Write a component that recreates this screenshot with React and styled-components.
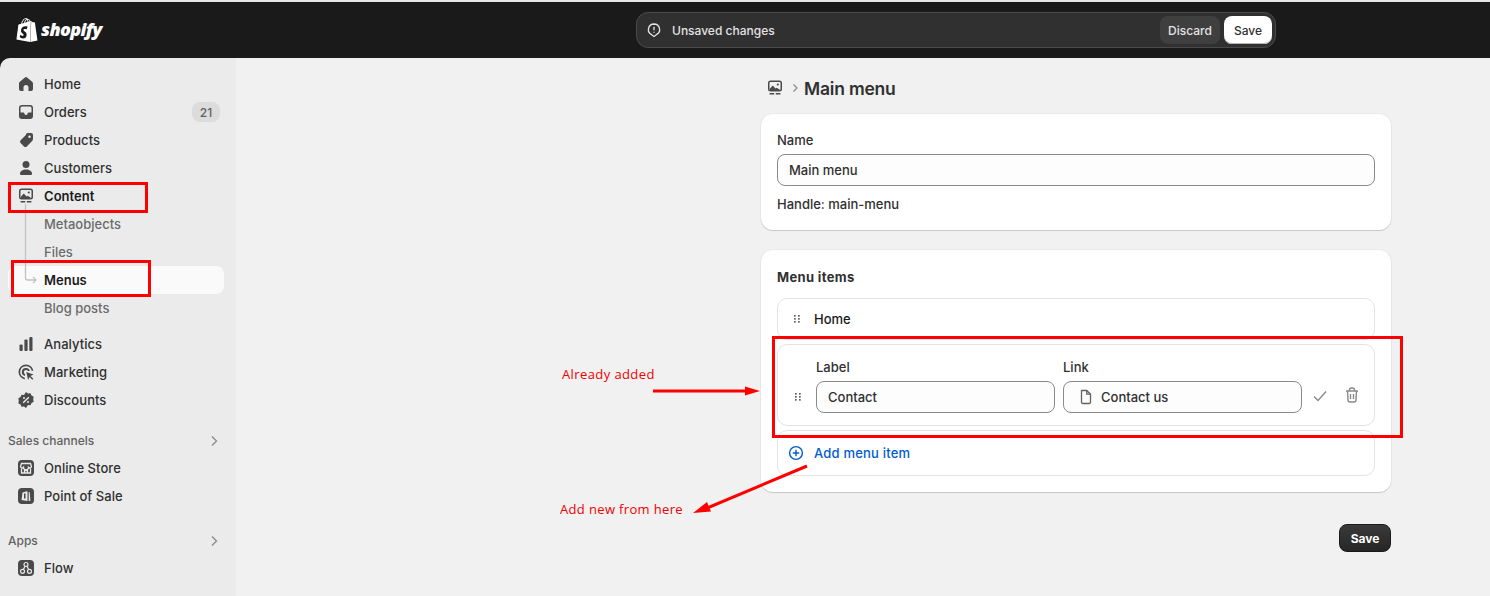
import React from "react";
import styled, { createGlobalStyle } from "styled-components";
import { SiShopify } from "react-icons/si";

const Global = createGlobalStyle`
  html, body { margin: 0; padding: 0; background: #f1f1f1; }
  * { box-sizing: border-box; }
  body { font-family: Inter, "Liberation Sans", sans-serif; font-size: 13px; color: #303030; }
`;

const Page = styled.div`
  position: relative; width: 1490px; height: 596px; overflow: hidden;
  display: flex; flex-direction: column; border-top: 2px solid #e6e6e6; background: #1a1a1a;
`;
const TopBar = styled.header`
  flex: 0 0 56px; display: flex; align-items: center; position: relative; padding-left: 15px;
`;
const Logo = styled.div`display: flex; align-items: center; gap: 2px; width: 621px; color: #fff;`;
const Wordmark = styled.span`
  font: italic 800 18px/24px "Open Sans", sans-serif; letter-spacing: -0.65px; color: #fff; position: relative; top: -1px;
`;
const SavePill = styled.div`
  width: 640px; height: 36px; display: flex; align-items: center; gap: 4px; padding: 0 3px 0 9px;
  background: #303030; border: 1px solid #4a4a4a; border-radius: 12px;
`;
const PillText = styled.span`flex: 1; color: #e3e3e3; font-size: 12px; font-weight: 450; margin-left: 6px;`;
const DiscardBtn = styled.button`
  height: 28px; width: 60px; border: 0; border-radius: 8px; background: #3f3f3f; color: #e3e3e3;
  font: 550 12px Inter, sans-serif; padding: 0;
`;
const WhiteBtn = styled.button`
  height: 28px; width: 48px; border: 0; border-radius: 8px; background: #fff; color: #303030;
  font: 500 12px Inter, sans-serif; padding: 0; box-shadow: inset 0 -1px 0 #b5b5b5;
`;
const Body = styled.div`flex: 1; display: flex; min-height: 0;`;
const Sidebar = styled.nav`
  flex: 0 0 236px; background: #ebebeb; border-top-left-radius: 10px; padding: 12px 12px 0 8px;
`;
const NavGroup = styled.div`position: relative; margin-bottom: ${p => p.$mb || 0}px;`;
const NavRow = styled.div`
  height: 28px; display: flex; align-items: center; gap: 8px; border-radius: 8px; width: 216px;
  background: ${p => (p.$active ? "#fafafa" : "transparent")};
  color: ${p => (p.$sub ? "#6b6b6b" : p.$strong ? "#1a1a1a" : "#303030")};
  font-weight: ${p => (p.$sub ? 500 : p.$strong ? 600 : 550)};
  padding-left: ${p => (p.$indent ? 36 : 8)}px;
`;
const NavIcon = styled.svg`flex: 0 0 20px; width: 20px; height: 20px; color: #4a4a4a;`;
const NavLabel = styled.span`flex: 1; letter-spacing: 0.05px;`;
const Badge = styled.span`
  height: 20px; width: 28px; border-radius: 8px; background: #dcdcdc; color: #616161; font-size: 12px;
  font-weight: 500; display: flex; align-items: center; justify-content: center; margin-right: 4px;
`;
const SectionHead = styled.div`
  height: 27px; display: flex; align-items: center; justify-content: space-between; width: 216px;
  padding-right: 2px; color: #616161; font-size: 12px; font-weight: 500; margin-top: ${p => p.$mt || 0}px;
`;
const TreeLine = styled.svg`position: absolute; left: 12px; top: 134px; width: 20px; height: 90px; pointer-events: none;`;
const Main = styled.main`
  flex: 1; background: #f1f1f1; padding: 0 99px 0 525px; display: flex; flex-direction: column;
`;
const Crumbs = styled.div`height: 56px; padding: 4px 0 0 4px; display: flex; align-items: center; gap: 4px; color: #8a8a8a;`;
const CrumbIcon = styled.svg`width: 20px; height: 20px; color: #4a4a4a;`;
const Title = styled.h1`margin: 0 0 0 -1px; font-size: 17.5px; font-weight: 600; color: #303030; letter-spacing: -0.2px;`;
const Card = styled.section`
  background: #fff; border-radius: 12px; padding: 16px; margin-bottom: ${p => p.$mb ?? 20}px;
  box-shadow: 0 1px 1px rgba(0,0,0,.14), 0 0 0 1px rgba(0,0,0,.03);
`;
const FieldLabel = styled.div`height: 20px; line-height: 20px; color: #303030; font-weight: 450; margin-bottom: 4px;`;
const TextBox = styled.div`
  height: 32px; border: 1px solid #8a8a8a; border-radius: 8px; background: #fdfdfd; display: flex; align-items: center;
  gap: 5px; padding: 0 11px; color: #303030; font-weight: 450;
`;
const Handle = styled.div`height: 20px; line-height: 20px; margin-top: 8px; color: #303030; font-weight: 450;`;
const CardTitle = styled.h2`margin: 1px 0 11px; font-size: 13px; line-height: 20px; font-weight: 650; color: #303030; letter-spacing: 0.35px;`;
const ItemStack = styled.div`display: flex; flex-direction: column; gap: 4px;`;
const Item = styled.div`
  height: ${p => p.$h}px; border: 1px solid #e3e3e3; border-radius: 10px; display: flex; align-items: ${p => p.$align || "center"};
  padding: ${p => p.$pad || "0 0 0 14px"};
`;
const ItemName = styled.span`margin-left: 12px; margin-top: -1px; font-weight: 500; color: #1a1a1a;`;
const Drag = styled.svg`width: 10px; height: 12px; color: #616161; flex: 0 0 10px; margin-top: ${p => p.$mt || 0}px;`;
const FieldCol = styled.div`flex: 0 0 239px; margin: 0 8px 0 ${p => p.$ml || 0}px;`;
const ActionIcon = styled.svg`
  width: 20px; height: 20px; flex: 0 0 20px; fill: none; stroke: #8a8a8a; stroke-width: 1.4;
  margin-top: ${p => p.$mt}px; margin-left: ${p => p.$ml}px;
`;
const DocIcon = styled.svg`width: 20px; height: 20px; flex: 0 0 20px; fill: none; stroke: #616161; stroke-width: 1.3; margin-left: 1px;`;
const AddIcon = styled.svg`width: 16px; height: 16px; fill: none; stroke: #005bd3; stroke-width: 1.4;`;
const AddLabel = styled.span`margin-left: 10px; color: #005bd3; font-weight: 550; letter-spacing: 0.2px;`;
const Footer = styled.div`display: flex; justify-content: flex-end; margin-top: 32px;`;
const DarkBtn = styled.button`
  width: 52px; height: 28px; border-radius: 8px; border: 1px solid #1a1a1a; padding: 0; color: #fff;
  background: linear-gradient(#3a3a3a, #262626); font: 650 12px Inter, sans-serif;
`;
const RedBox = styled.div`
  position: absolute; left: ${p => p.$x}px; top: ${p => p.$y}px; width: ${p => p.$w}px; height: ${p => p.$h}px;
  border: 3px solid #ff0000; pointer-events: none;
`;
const Note = styled.span`
  position: absolute; left: ${p => p.$x}px; top: ${p => p.$y}px; color: #f00000; font: 400 13px/18px "Open Sans", sans-serif;
  letter-spacing: ${p => p.$ls}px; white-space: nowrap;
`;
const ArrowLayer = styled.svg`position: absolute; left: 0; top: 0; width: 1490px; height: 596px; pointer-events: none;`;

const I = ({ children, as: As = NavIcon }) => <As viewBox="0 0 20 20" fill="currentColor">{children}</As>;

const ContentGlyph = (
  <>
    <path fillRule="evenodd" d="M5.500 2.500h9a2.500 2.500 0 0 1 2.500 2.500v6a2.500 2.500 0 0 1-2.500 2.500h-9A2.500 2.500 0 0 1 3 11V5a2.500 2.500 0 0 1 2.500-2.500Zm0 1.500a1 1 0 0 0-1 1v6a1 1 0 0 0 1 1h9a1 1 0 0 0 1-1V5a1 1 0 0 0-1-1h-9Z" />
    <circle cx="12.800" cy="6.500" r="1.100" />
    <path d="M5 10.500 7.800 7.500l2.700 3 1.200-.8 2.800 1.800v.5H5Z" />
    <rect x="4.500" y="15" width="4.800" height="1.500" rx=".6" />
    <rect x="10.700" y="15" width="4.800" height="1.500" rx=".6" />
  </>
);

const icons = {
  home: <path d="M8.900 3.400a1.700 1.700 0 0 1 2.200 0l5 4.300c.6.500.9 1.100.9 1.800V15a2 2 0 0 1-2 2h-2.500v-3.500a2.500 2.500 0 0 0-5 0V17H5a2 2 0 0 1-2-2V9.500c0-.7.300-1.300.9-1.800l5-4.300Z" />,
  orders: <path fillRule="evenodd" d="M6 3h8a3 3 0 0 1 3 3v8a3 3 0 0 1-3 3H6a3 3 0 0 1-3-3V6a3 3 0 0 1 3-3Zm0 1.500A1.500 1.500 0 0 0 4.500 6v4.500h3c.4 0 .8.300.8.700a1.700 1.700 0 0 0 3.400 0c0-.4.400-.7.800-.7h3V6A1.500 1.500 0 0 0 14 4.500H6Z" />,
  products: <path fillRule="evenodd" d="M11 3h4a2 2 0 0 1 2 2v4c0 .8-.3 1.500-.9 2.100l-5.300 5.300a2 2 0 0 1-2.800 0l-3.400-3.400a2 2 0 0 1 0-2.800l5.300-5.300A3 3 0 0 1 11 3Zm2.500 2.500a1 1 0 1 0 0 2.500 1 1 0 0 0 0-2.500Z" />,
  customers: <><circle cx="10" cy="6.500" r="3.500" /><path d="M10 11.500c-3.500 0-6 1.800-6 4v.2c0 .7.600 1.300 1.300 1.300h9.400c.7 0 1.300-.6 1.300-1.300v-.2c0-2.200-2.500-4-6-4Z" /></>,
  content: ContentGlyph,
  analytics: <><rect x="3.500" y="10.500" width="3.200" height="6.500" rx="1" /><rect x="8.400" y="5.500" width="3.200" height="11.500" rx="1" /><rect x="13.300" y="3" width="3.200" height="14" rx="1" /></>,
  marketing: <><path fillRule="evenodd" d="M10 2.500a7.500 7.500 0 0 1 7.400 6.300h-1.700A5.800 5.800 0 1 0 8.800 15.700v1.700A7.500 7.500 0 0 1 10 2.500Z" /><path fillRule="evenodd" d="M10 6a4 4 0 0 1 3.900 3h-1.900a2.200 2.200 0 1 0-3 3v1.900A4 4 0 0 1 10 6Z" /><path d="m10.300 10 7.200 2.600-3 1.400 2.800 2.800-1 1-2.800-2.800-1.400 3L10.300 10Z" /></>,
  discounts: <path fillRule="evenodd" d="m10 2 2 1.500 2.500-.2 1 2.300 2.200 1.200-.5 2.500.5 2.500-2.200 1.200-1 2.300-2.500-.2L10 18l-2-1.500-2.500.2-1-2.300-2.200-1.200.5-2.500-.5-2.500 2.200-1.200 1-2.300 2.500.2L10 2Zm-2 5a1 1 0 1 0 0 2 1 1 0 0 0 0-2Zm4 4a1 1 0 1 0 0 2 1 1 0 0 0 0-2Zm.3-4.300L6.700 12.300l1 1 5.600-5.600-1-1Z" />,
  store: <><rect x="2" y="2" width="16" height="16" rx="4" /><g fill="none" stroke="#ebebeb" strokeWidth="1.300"><path d="M5.500 5.500h9l1 3.200a1.700 1.700 0 0 1-3 .6 2 2 0 0 1-5 0 1.700 1.700 0 0 1-3-.6l1-3.200Z" /><path d="M5.500 10.500V15h9v-4.500" /><path d="M8.500 15v-2.500h3V15" /></g></>,
  pos: <><rect x="2" y="2" width="16" height="16" rx="4" /><path fill="#ebebeb" d="M6.500 6.500 11 5.300l.5.200V15l-6-1 1-7.500Zm6.200-.5 1 .2.700 8.500-1.700.3V6Z" /><rect x="8" y="7.500" width="1.500" height="5" fill="#4a4a4a" /></>,
  flow: <><rect x="2" y="2" width="16" height="16" rx="4" /><g fill="none" stroke="#ebebeb" strokeWidth="1.200"><circle cx="10" cy="6.500" r="2" /><circle cx="6.500" cy="13.300" r="2" /><circle cx="13.500" cy="13.300" r="2" /><path d="M9 8.300 7.400 11.500M11 8.300l1.600 3.200" /></g></>,
};

const Nav = ({ icon, children, badge, strong }) => (
  <NavRow $strong={strong}>
    <I>{icons[icon]}</I>
    <NavLabel>{children}</NavLabel>
    {badge && <Badge>{badge}</Badge>}
  </NavRow>
);

const Chevron = () => (
  <svg width="16" height="16" viewBox="0 0 16 16" fill="none" stroke="#8a8a8a" strokeWidth="1.300"><path d="m6 3.500 4.500 4.500L6 12.500" /></svg>
);

const DragDots = ({ mt }) => (
  <Drag viewBox="0 0 10 12" $mt={mt}>
    {[2, 5, 8].flatMap(y => [3, 7].map(x => <rect key={x + "-" + y} x={x - 1} y={y} width="1.700" height="1.700" fill="currentColor" />))}
  </Drag>
);

export default function App() {
  return (
    <>
      <Global />
      <Page>
        <TopBar>
          <Logo>
            <SiShopify size={24} color="#fff" />
            <Wordmark>shopify</Wordmark>
          </Logo>
          <SavePill>
            <svg width="16" height="16" viewBox="0 0 16 16" fill="none" stroke="#e3e3e3" strokeWidth="1.300">
              <path d="M8 2a5.600 5.600 0 0 1 2.300 10.700L8 14.500l-2.300-1.800A5.600 5.600 0 0 1 8 2Z" />
              <path d="M8 4.800v3.400M8 9.800v1" />
            </svg>
            <PillText>Unsaved changes</PillText>
            <DiscardBtn>Discard</DiscardBtn>
            <WhiteBtn>Save</WhiteBtn>
          </SavePill>
        </TopBar>
        <Body>
          <Sidebar>
            <NavGroup $mb={8}>
              <Nav icon="home">Home</Nav>
              <Nav icon="orders" badge="21">Orders</Nav>
              <Nav icon="products">Products</Nav>
              <Nav icon="customers">Customers</Nav>
              <Nav icon="content" strong>Content</Nav>
              <NavRow $sub $indent>Metaobjects</NavRow>
              <NavRow $sub $indent>Files</NavRow>
              <NavRow $active $strong $indent>Menus</NavRow>
              <NavRow $sub $indent>Blog posts</NavRow>
              <TreeLine viewBox="0 0 20 90" fill="none" stroke="#c2c2c2" strokeWidth="1.300">
                <path d="M5.500 0v74a2 2 0 0 0 2 2H16M13 73l3 3-3 3" />
              </TreeLine>
            </NavGroup>
            <NavGroup>
              <Nav icon="analytics">Analytics</Nav>
              <Nav icon="marketing">Marketing</Nav>
              <Nav icon="discounts">Discounts</Nav>
            </NavGroup>
            <SectionHead $mt={13}>Sales channels<Chevron /></SectionHead>
            <Nav icon="store">Online Store</Nav>
            <Nav icon="pos">Point of Sale</Nav>
            <SectionHead $mt={17}>Apps<Chevron /></SectionHead>
            <Nav icon="flow">Flow</Nav>
          </Sidebar>
          <Main>
            <Crumbs>
              <I as={CrumbIcon}>{icons.content}</I>
              <svg width="12" height="12" viewBox="0 0 12 12" fill="none" stroke="#8a8a8a" strokeWidth="1.200"><path d="m4.500 2.500 3.500 3.500-3.500 3.500" /></svg>
              <Title>Main menu</Title>
            </Crumbs>
            <Card>
              <FieldLabel>Name</FieldLabel>
              <TextBox>Main menu</TextBox>
              <Handle>Handle: main-menu</Handle>
            </Card>
            <Card $mb={0}>
              <CardTitle>Menu items</CardTitle>
              <ItemStack>
                <Item $h={42}>
                  <DragDots />
                  <ItemName>Home</ItemName>
                </Item>
                <Item $h={82} $align="flex-start" $pad="12px 0 0 15px">
                  <DragDots mt={34} />
                  <FieldCol $ml={13}>
                    <FieldLabel>Label</FieldLabel>
                    <TextBox>Contact</TextBox>
                  </FieldCol>
                  <FieldCol>
                    <FieldLabel>Link</FieldLabel>
                    <TextBox>
                      <DocIcon viewBox="0 0 20 20">
                        <path d="M5.500 3.500h5.300l3.700 3.700v8a1.300 1.300 0 0 1-1.300 1.300H6.800a1.300 1.300 0 0 1-1.300-1.300V3.500Z" strokeLinejoin="round" />
                        <path d="M10.800 3.500v3.700h3.700" />
                      </DocIcon>
                      Contact us
                    </TextBox>
                  </FieldCol>
                  <ActionIcon viewBox="0 0 20 20" $mt={29} $ml={0}>
                    <path d="m4 10.500 4 4 8-9" />
                  </ActionIcon>
                  <ActionIcon viewBox="0 0 20 20" $mt={28} $ml={12}>
                    <path d="M4 6h12M7.500 6V5a2 2 0 0 1 2-2h1a2 2 0 0 1 2 2v1M5.500 6l.5 9a2 2 0 0 0 2 2h4a2 2 0 0 0 2-2l.5-9M8.500 9v5M11.500 9v5" />
                  </ActionIcon>
                </Item>
                <Item $h={46} $pad="0 0 0 10px">
                  <AddIcon viewBox="0 0 16 16">
                    <circle cx="8" cy="8" r="6.400" />
                    <path d="M8 4.800v6.400M4.800 8h6.400" />
                  </AddIcon>
                  <AddLabel>Add menu item</AddLabel>
                </Item>
              </ItemStack>
            </Card>
            <Footer>
              <DarkBtn>Save</DarkBtn>
            </Footer>
          </Main>
        </Body>
        <RedBox $x={8} $y={180} $w={140} $h={31} />
        <RedBox $x={11} $y={258} $w={140} $h={37} />
        <RedBox $x={772} $y={334} $w={631} $h={102} />
        <Note $x={562} $y={363} $ls={0.4}>Already added</Note>
        <Note $x={560} $y={498} $ls={0.35}>Add new from here</Note>
        <ArrowLayer viewBox="0 2 1490 596">
          <path d="M653 391h94" stroke="#f00" strokeWidth="3" fill="none" />
          <path d="M745 386.500 760 391l-15 4.500Z" fill="#f00" />
          <path d="M807 466 705 509" stroke="#f00" strokeWidth="3" fill="none" />
          <path d="m693 513 14-11 4 9.500Z" fill="#f00" />
        </ArrowLayer>
      </Page>
    </>
  );
}
